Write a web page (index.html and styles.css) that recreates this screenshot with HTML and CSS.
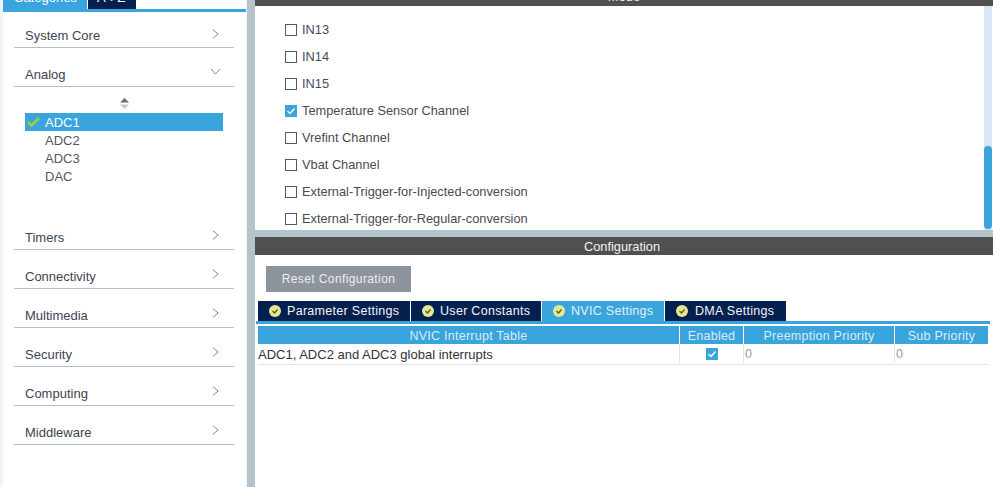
FILE: index.html
```html
<!DOCTYPE html>
<html lang="en">
<head>
<meta charset="utf-8">
<title>ADC1 Configuration</title>
<link rel="stylesheet" href="styles.css">
</head>
<body>
<div class="app">
  <aside class="side">
    <div class="side-tabs">
      <div class="side-tab active">Categories</div>
      <div class="side-tab az">A-&gt;Z</div>
    </div>
    <div class="side-line"></div>
    <div class="cat first"><span>System Core</span><svg class="chev" viewBox="0 0 8 12"><path d="M1 1l6 5-6 5"/></svg></div>
    <div class="cat"><span>Analog</span><svg class="chev down" viewBox="0 0 12 8"><path d="M1 1l5 6 5-6"/></svg></div>
    <div class="sorter"><svg viewBox="0 0 9 11"><path class="up" d="M4.5 0L9 4.5H0z"/><path class="dn" d="M0 6.500H9L4.500 11z"/></svg></div>
    <ul class="items">
      <li class="sel"><svg class="tick" viewBox="0 0 13 10"><path d="M1 5l3.500 3.500L12 1"/></svg>ADC1</li>
      <li>ADC2</li>
      <li>ADC3</li>
      <li>DAC</li>
    </ul>
    <div class="cat gapped"><span>Timers</span><svg class="chev" viewBox="0 0 8 12"><path d="M1 1l6 5-6 5"/></svg></div>
    <div class="cat"><span>Connectivity</span><svg class="chev" viewBox="0 0 8 12"><path d="M1 1l6 5-6 5"/></svg></div>
    <div class="cat"><span>Multimedia</span><svg class="chev" viewBox="0 0 8 12"><path d="M1 1l6 5-6 5"/></svg></div>
    <div class="cat"><span>Security</span><svg class="chev" viewBox="0 0 8 12"><path d="M1 1l6 5-6 5"/></svg></div>
    <div class="cat"><span>Computing</span><svg class="chev" viewBox="0 0 8 12"><path d="M1 1l6 5-6 5"/></svg></div>
    <div class="cat"><span>Middleware</span><svg class="chev" viewBox="0 0 8 12"><path d="M1 1l6 5-6 5"/></svg></div>
  </aside>
  <main class="main">
    <div class="mode-head"><span>Mode</span></div>
    <section class="mode">
      <div class="channels">
        <label class="ch"><i class="box"></i>IN13</label>
        <label class="ch"><i class="box"></i>IN14</label>
        <label class="ch"><i class="box"></i>IN15</label>
        <label class="ch"><svg class="box-on" viewBox="0 0 12 12"><rect width="12" height="12"/><path d="M2.500 6l2.500 2.500L9.500 3.500"/></svg>Temperature Sensor Channel</label>
        <label class="ch"><i class="box"></i>Vrefint Channel</label>
        <label class="ch"><i class="box"></i>Vbat Channel</label>
        <label class="ch"><i class="box"></i>External-Trigger-for-Injected-conversion</label>
        <label class="ch"><i class="box"></i>External-Trigger-for-Regular-conversion</label>
      </div>
      <div class="scroll"><div class="thumb"></div></div>
    </section>
    <div class="conf-head">Configuration</div>
    <section class="conf">
      <button class="reset">Reset Configuration</button>
      <div class="tabs">
        <div class="tab t1"><svg class="ok" viewBox="0 0 12 12"><circle cx="6" cy="6" r="6"/><path d="M3.500 6l2 2 3-3.500"/></svg>Parameter Settings</div>
        <div class="tab t2"><svg class="ok" viewBox="0 0 12 12"><circle cx="6" cy="6" r="6"/><path d="M3.500 6l2 2 3-3.500"/></svg>User Constants</div>
        <div class="tab t3 on"><svg class="ok" viewBox="0 0 12 12"><circle cx="6" cy="6" r="6"/><path d="M3.500 6l2 2 3-3.500"/></svg>NVIC Settings</div>
        <div class="tab t4"><svg class="ok" viewBox="0 0 12 12"><circle cx="6" cy="6" r="6"/><path d="M3.500 6l2 2 3-3.500"/></svg>DMA Settings</div>
      </div>
      <div class="tabs-line"></div>
      <div class="grid">
        <div class="th">NVIC Interrupt Table</div>
        <div class="th">Enabled</div>
        <div class="th">Preemption Priority</div>
        <div class="th">Sub Priority</div>
        <div class="td name">ADC1, ADC2 and ADC3 global interrupts</div>
        <div class="td mid"><svg class="box-on" viewBox="0 0 12 12"><rect width="12" height="12"/><path d="M2.500 6l2.500 2.500L9.500 3.500"/></svg></div>
        <div class="td num">0</div>
        <div class="td num">0</div>
      </div>
    </section>
  </main>
</div>
</body>
</html>
```
FILE: styles.css
```css
* { box-sizing: border-box; }
html, body { margin: 0; height: 100%; overflow: hidden; background: #fff; }
body { font-family: "Liberation Sans", Arial, sans-serif; font-size: 13px; color: #3f3f4a; }
.app { display: flex; width: 993px; height: 487px; overflow: hidden; }

.side { width: 247px; flex: none; border-left: 3px solid #f1f4f6; border-right: 1px solid #eef2f4; background: #fff; }
.side-tabs { display: flex; gap: 1px; height: 9px; align-items: flex-end; overflow: hidden; }
.side-tab { flex: none; height: 21px; line-height: 19px; padding: 0 11px; background: #04204f; color: #fff; font-size: 13px; }
.side-tab.active { width: 84px; background: #39a5dc; }
.side-tab.az { width: 48px; padding: 0 9px; }
.side-line { height: 3px; width: 243px; background: #39a5dc; }
.cat { display: flex; align-items: center; justify-content: space-between; width: 220px; height: 39px; margin-left: 11px; padding: 14px 15px 0 11px; border-bottom: 1px solid #b5bcc2; font-size: 13px; color: #3e4354; }
.cat.first { height: 36px; padding-top: 12px; }
.cat.gapped { margin-top: 26px; }
.chev { width: 7px; height: 12px; margin-top: -4px; fill: none; stroke: #6f757c; stroke-width: 1; }
.chev.down { width: 11px; height: 7px; margin-right: -2px; margin-top: -5px; }
.sorter { display: flex; justify-content: center; width: 220px; margin: 11px 0 0 11px; height: 11px; }
.sorter svg { width: 9px; height: 11px; }
.up { fill: #666d72; }
.dn { fill: #c2c7ca; }
.items { list-style: none; margin: 4px 0 0 22px; padding: 0; width: 198px; }
.items li { height: 18px; line-height: 20px; padding-left: 20px; position: relative; font-size: 13px; color: #56565f; }
.items li.sel { background: #39a5dc; color: #fff; }
.tick { position: absolute; left: 2px; top: 4px; width: 13px; height: 10px; fill: none; stroke: #9fce3e; stroke-width: 2.500; }

.main { flex: 1; min-width: 0; padding-left: 8px; background: #b5c3ca; display: flex; flex-direction: column; }
.mode-head { height: 6px; background: #505050; overflow: hidden; text-align: center; color: #eee; }
.mode-head span { display: block; margin-top: -10px; line-height: 14px; font-size: 13px; }
.mode { display: flex; height: 224px; background: #fff; }
.channels { flex: 1; padding: 10px 0 0 30px; overflow: hidden; }
.ch { display: flex; align-items: center; height: 27px; gap: 5px; font-size: 12.800px; color: #4a4a52; }
.box { width: 12px; height: 12px; border: 1px solid #55585c; background: #fff; flex: none; }
.box-on { width: 12px; height: 12px; flex: none; }
.box-on rect { fill: #39a5dc; }
.box-on path { fill: none; stroke: #fff; stroke-width: 1.300; }
.scroll { width: 8px; margin-right: 1px; background: #d9e7f4; padding-top: 140px; }
.thumb { height: 83px; background: #39a5dc; border-radius: 4px; }
.conf-head { margin-top: 7px; height: 18px; line-height: 19px; background: #505050; color: #f2f2f2; text-align: center; font-size: 12.800px; padding-right: 4px; }
.conf { flex: 1; background: #fff; padding-top: 11px; }
.reset { display: block; width: 145px; height: 26px; margin-left: 11px; padding: 0; border: 0; background: #8d949b; color: #eceef0; font: 12px "Liberation Sans", Arial, sans-serif; letter-spacing: .4px; }
.tabs { display: flex; gap: 1px; margin: 9px 0 0 3px; height: 20px; }
.tab { display: flex; align-items: center; gap: 6px; padding-left: 11px; background: #04204f; color: #f2f4f6; font-size: 12.500px; letter-spacing: .3px; height: 20px; }
.tab.on { background: #39a5dc; color: #e3eef5; }
.t1 { width: 152px; }
.t2 { width: 130px; }
.t3 { width: 122px; }
.t4 { width: 121px; }
.t4 .ok { margin-right: 1px; }
.ok { width: 12px; height: 12px; flex: none; }
.ok circle { fill: #e6e88f; }
.ok path { fill: none; stroke: #4a5a30; stroke-width: 1.300; }
.tabs-line { height: 3px; width: 734px; margin-left: 1px; background: #39a5dc; }
.grid { display: grid; grid-template-columns: 421px 63px 150px 93px; column-gap: 1px; margin: 2px 0 0 3px; width: 730px; }
.th { height: 18px; line-height: 20px; background: #39a5dc; color: #dcebf4; text-align: center; font-size: 12.500px; letter-spacing: .25px; }
.td { height: 21px; line-height: 21px; border-bottom: 1px solid #e2e4e6; font-size: 12.500px; position: relative; }
.td + .td::before { content: ""; position: absolute; left: -1px; top: 0; bottom: 0; border-left: 1px solid #e2e4e6; }
.name { color: #333338; font-size: 13px; }
.mid { display: flex; align-items: center; justify-content: center; padding-bottom: 1px; }
.num { color: #9a9a9a; padding-left: 1px; }
```
